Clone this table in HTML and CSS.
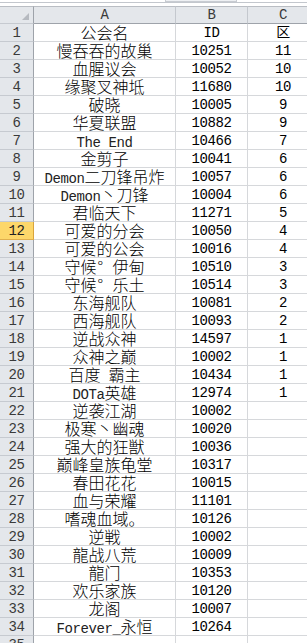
FILE: index.html
```html
<!DOCTYPE html>
<html>
<head>
<meta charset="utf-8">
<link rel="stylesheet" href="styles.css">
</head>
<body>
<div class="sheet">
  <div class="top"><div class="thumb"></div></div>
  <div class="row head">
    <div class="rh corner"><span class="tri"></span></div>
    <div class="ch">A</div><div class="ch">B</div><div class="ch">C</div>
  </div>
  <div class="row"><div class="rh">1</div><div class="c a">公会名</div><div class="c n">ID</div><div class="c n">区</div></div>
  <div class="row"><div class="rh">2</div><div class="c a">慢吞吞的故巢</div><div class="c n">10251</div><div class="c n">11</div></div>
  <div class="row"><div class="rh">3</div><div class="c a">血腥议会</div><div class="c n">10052</div><div class="c n">10</div></div>
  <div class="row"><div class="rh">4</div><div class="c a">缘聚叉神坻</div><div class="c n">11680</div><div class="c n">10</div></div>
  <div class="row"><div class="rh">5</div><div class="c a">破晓</div><div class="c n">10005</div><div class="c n">9</div></div>
  <div class="row"><div class="rh">6</div><div class="c a">华夏联盟</div><div class="c n">10882</div><div class="c n">9</div></div>
  <div class="row"><div class="rh">7</div><div class="c a"><span class="l">The End</span></div><div class="c n">10466</div><div class="c n">7</div></div>
  <div class="row"><div class="rh">8</div><div class="c a">金剪子</div><div class="c n">10041</div><div class="c n">6</div></div>
  <div class="row"><div class="rh">9</div><div class="c a"><span class="l">Demon</span>二刀锋吊炸</div><div class="c n">10057</div><div class="c n">6</div></div>
  <div class="row"><div class="rh">10</div><div class="c a"><span class="l">Demon</span>丶刀锋</div><div class="c n">10004</div><div class="c n">6</div></div>
  <div class="row"><div class="rh">11</div><div class="c a">君临天下</div><div class="c n">11271</div><div class="c n">5</div></div>
  <div class="row"><div class="rh sel">12</div><div class="c a">可爱的分会</div><div class="c n">10050</div><div class="c n">4</div></div>
  <div class="row"><div class="rh">13</div><div class="c a">可爱的公会</div><div class="c n">10016</div><div class="c n">4</div></div>
  <div class="row"><div class="rh">14</div><div class="c a">守候<span class="deg">°</span>伊甸</div><div class="c n">10510</div><div class="c n">3</div></div>
  <div class="row"><div class="rh">15</div><div class="c a">守候<span class="deg">°</span>乐土</div><div class="c n">10514</div><div class="c n">3</div></div>
  <div class="row"><div class="rh">16</div><div class="c a">东海舰队</div><div class="c n">10081</div><div class="c n">2</div></div>
  <div class="row"><div class="rh">17</div><div class="c a">西海舰队</div><div class="c n">10093</div><div class="c n">2</div></div>
  <div class="row"><div class="rh">18</div><div class="c a">逆战众神</div><div class="c n">14597</div><div class="c n">1</div></div>
  <div class="row"><div class="rh">19</div><div class="c a">众神之巅</div><div class="c n">10002</div><div class="c n">1</div></div>
  <div class="row"><div class="rh">20</div><div class="c a">百度<span class="l"> </span>霸主</div><div class="c n">10434</div><div class="c n">1</div></div>
  <div class="row"><div class="rh">21</div><div class="c a"><span class="l">DOTa</span>英雄</div><div class="c n">12974</div><div class="c n">1</div></div>
  <div class="row"><div class="rh">22</div><div class="c a">逆袭江湖</div><div class="c n">10002</div><div class="c n"></div></div>
  <div class="row"><div class="rh">23</div><div class="c a">极寒丶幽魂</div><div class="c n">10020</div><div class="c n"></div></div>
  <div class="row"><div class="rh">24</div><div class="c a">强大的狂獣</div><div class="c n">10036</div><div class="c n"></div></div>
  <div class="row"><div class="rh">25</div><div class="c a">巅峰皇族龟堂</div><div class="c n">10317</div><div class="c n"></div></div>
  <div class="row"><div class="rh">26</div><div class="c a">春田花花</div><div class="c n">10015</div><div class="c n"></div></div>
  <div class="row"><div class="rh">27</div><div class="c a">血与荣耀</div><div class="c n">11101</div><div class="c n"></div></div>
  <div class="row"><div class="rh">28</div><div class="c a">嗜魂血域。</div><div class="c n">10126</div><div class="c n"></div></div>
  <div class="row"><div class="rh">29</div><div class="c a">逆戦</div><div class="c n">10002</div><div class="c n"></div></div>
  <div class="row"><div class="rh">30</div><div class="c a">龍战八荒</div><div class="c n">10009</div><div class="c n"></div></div>
  <div class="row"><div class="rh">31</div><div class="c a">龍门</div><div class="c n">10353</div><div class="c n"></div></div>
  <div class="row"><div class="rh">32</div><div class="c a">欢乐家族</div><div class="c n">10120</div><div class="c n"></div></div>
  <div class="row"><div class="rh">33</div><div class="c a">龙阁</div><div class="c n">10007</div><div class="c n"></div></div>
  <div class="row"><div class="rh">34</div><div class="c a"><span class="l">Forever_</span>永恒</div><div class="c n">10264</div><div class="c n"></div></div>
  <div class="row"><div class="rh">35</div><div class="c a"></div><div class="c n"></div><div class="c n"></div></div>
</div>
</body>
</html>
```
FILE: styles.css
```css
html, body {
  margin: 0;
  padding: 0;
  background: #ffffff;
  overflow: hidden;
}
.sheet {
  width: 319px;
  color: #000;
}
.top {
  height: 2px;
  border-bottom: 1px solid #c3c7cd;
  margin-bottom: 3px;
  display: flex;
}
.thumb {
  margin-left: 165px;
  width: 70px;
  height: 1px;
  border: 1px solid #c8ccd2;
  border-top: none;
  background: #eef0f3;
}
.row {
  display: grid;
  grid-template-columns: 34px 142px 72px 71px;
}
.row > div {
  box-sizing: border-box;
  height: 18px;
  border-right: 1px solid #d6d8db;
  border-bottom: 1px solid #d6d8db;
  white-space: nowrap;
  text-align: center;
}
.head > div {
  border-top: 1px solid #b9bdc3;
  border-bottom: 1px solid #9ea3aa;
  border-right: 1px solid #c4c8ce;
  background: #e4e7eb;
  font-family: "Liberation Mono", monospace;
  font-size: 14px;
  letter-spacing: -0.4px;
  line-height: 15px;
  padding-top: 1px;
  color: #3a3a3a;
}
.head > .corner {
  display: flex;
  justify-content: flex-end;
  align-items: flex-end;
  padding: 0 4px 3px 0;
  border-right: 1px solid #9ea3aa;
}
.tri {
  width: 0;
  height: 0;
  border-left: 7px solid transparent;
  border-bottom: 7px solid #b6bac0;
}
.row > .rh {
  background: #e4e7eb;
  border-right: 1px solid #9ea3aa;
  border-bottom: 1px solid #c6cad0;
  font-family: "Liberation Mono", monospace;
  font-size: 14px;
  letter-spacing: -0.4px;
  line-height: 15px;
  padding-top: 2px;
  color: #3a3a3a;
}
.row > .rh.sel {
  background: #fdd76a;
  border-right: 1px solid #d9a43c;
  border-bottom: 1px solid #e0b04e;
  color: #222;
}
.a {
  font-family: "Noto Sans CJK SC", sans-serif;
  font-weight: 300;
  font-size: 16px;
  line-height: 17px;
}
.l {
  font-family: "Liberation Mono", monospace;
  font-weight: 400;
  font-size: 14px;
  letter-spacing: -0.4px;
  color: #222;
}
.deg {
  display: inline-block;
  width: 16px;
  text-align: left;
  padding-left: 1px;
  box-sizing: border-box;
}
.n {
  font-family: "Liberation Mono", "Noto Sans CJK SC", monospace;
  font-size: 14px;
  letter-spacing: -0.4px;
  line-height: 15px;
  padding-top: 2px;
}
```
